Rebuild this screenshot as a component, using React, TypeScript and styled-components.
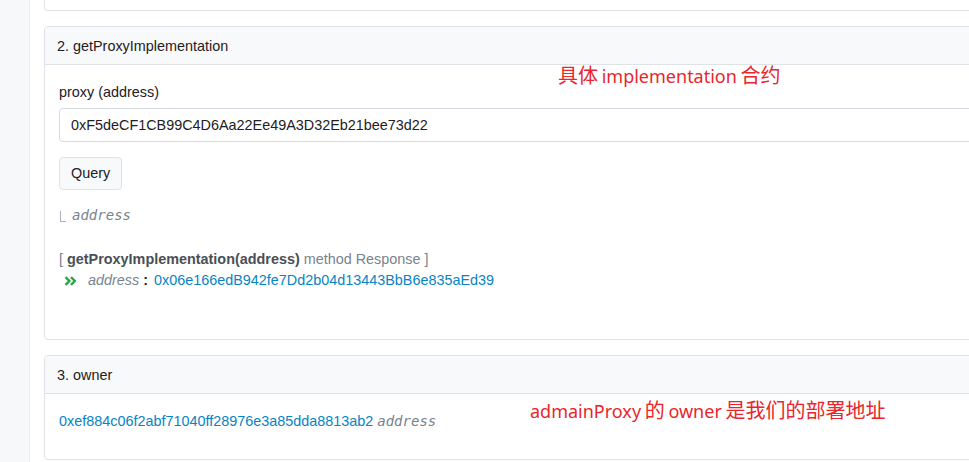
import styled, { createGlobalStyle, css } from 'styled-components';

const GlobalStyle = createGlobalStyle`
  html, body {
    margin: 0;
    padding: 0;
    background: #fff;
  }
  body {
    font-family: "Liberation Sans", Arial, Helvetica, sans-serif;
    font-size: 14.4px;
    line-height: 1.5;
    color: #1e2022;
  }
`;

const Page = styled.div`
  position: relative;
  display: flex;
  width: 969px;
  height: 462px;
  overflow: hidden;
`;

const Sidebar = styled.aside`
  flex: none;
  width: 29px;
  background: #f7f8fa;
  border-right: 1px solid #eceff3;
`;

const Main = styled.main`
  flex: 1;
  min-width: 0;
  display: flex;
  flex-direction: column;
  gap: 15px;
  padding-left: 14px;
  overflow: hidden;
`;

const Card = styled.section<{ $cut?: boolean }>`
  flex: none;
  width: 1000px;
  background: #fff;
  border: 1px solid #dfe2e6;
  border-radius: 4px;
  ${(p) =>
    p.$cut &&
    css`
      height: 10px;
      border-top: none;
      border-radius: 0 0 4px 4px;
    `}
`;

const CardHeader = styled.header`
  display: flex;
  align-items: center;
  box-sizing: border-box;
  height: 38px;
  padding: 2px 12px 0;
  background: #f8f9fa;
  border-bottom: 1px solid #dfe2e6;
  border-radius: 4px 4px 0 0;
`;

const CardBody = styled.div<{ $bottom: number }>`
  padding: 17px 14px ${(p) => p.$bottom}px;
`;

const FieldLabel = styled.label`
  display: block;
  margin-bottom: 4px;
`;

const AddressInput = styled.input`
  display: block;
  box-sizing: border-box;
  width: 100%;
  height: 34px;
  padding: 0 11px;
  font: inherit;
  color: #1e2022;
  background: #fff;
  border: 1px solid #d5dae2;
  border-radius: 4px;
  outline: none;
`;

const QueryButton = styled.button`
  display: block;
  height: 33px;
  margin-top: 15px;
  padding: 1px 11px 0;
  font: inherit;
  color: #1e2022;
  background: #f8f9fa;
  border: 1px solid #dfe2e6;
  border-radius: 4px;
`;

const ReturnType = styled.div`
  display: flex;
  align-items: center;
  margin-top: 15px;
`;

const Elbow = styled.span`
  display: inline-block;
  width: 5px;
  height: 10px;
  margin: 2px 6px 0 1px;
  border-left: 1px solid #aab3bc;
  border-bottom: 1px solid #aab3bc;
`;

const TypeName = styled.span`
  font-family: "DejaVu Sans Mono", "Liberation Mono", monospace;
  font-style: italic;
  font-size: 14px;
  color: #77838f;
`;

const ResponseTitle = styled.div`
  margin-top: 23px;
  color: #77838f;

  b {
    color: #4a4f55;
  }
`;

const ResultRow = styled.div`
  display: flex;
  align-items: center;
  padding-left: 5px;
`;

const ResultName = styled.i`
  margin-left: 11px;
  color: #77838f;
`;

const Colon = styled.b`
  margin: 0 6px 0 4px;
  color: #1e2022;
`;

const Link = styled.a`
  color: #0784c3;
  text-decoration: none;
`;

const OwnerRow = styled.div`
  display: flex;
  align-items: center;
  gap: 4px;
`;

const Note = styled.div<{ $top: number; $left: number }>`
  position: absolute;
  top: ${(p) => p.$top}px;
  left: ${(p) => p.$left}px;
  font-family: "Noto Sans", "Noto Sans CJK SC", sans-serif;
  font-size: 18px;
  line-height: 24px;
  word-spacing: -1px;
  color: #e8262b;
  white-space: nowrap;
`;

const Han = styled.span`
  font-family: "Noto Sans CJK SC", sans-serif;
  font-size: 20px;
`;

function Chevrons() {
  return (
    <svg width="13" height="10" viewBox="0 0 13 10" fill="none">
      <polyline points="1.5,1.2 5.3,5 1.5,8.8" stroke="#28a745" strokeWidth="2.4" />
      <polyline points="7,1.2 10.8,5 7,8.8" stroke="#28a745" strokeWidth="2.4" />
    </svg>
  );
}

export default function App() {
  return (
    <>
      <GlobalStyle />
      <Page>
        <Sidebar />
        <Main>
          <Card $cut />

          <Card>
            <CardHeader>2. getProxyImplementation</CardHeader>
            <CardBody $bottom={47}>
              <FieldLabel>proxy (address)</FieldLabel>
              <AddressInput readOnly defaultValue="0xF5deCF1CB99C4D6Aa22Ee49A3D32Eb21bee73d22" />
              <QueryButton>Query</QueryButton>
              <ReturnType>
                <Elbow />
                <TypeName>address</TypeName>
              </ReturnType>
              <ResponseTitle>
                [ <b>getProxyImplementation(address)</b> method Response ]
              </ResponseTitle>
              <ResultRow>
                <Chevrons />
                <ResultName>address</ResultName>
                <Colon>:</Colon>
                <Link href="#">0x06e166edB942fe7Dd2b04d13443BbB6e835aEd39</Link>
              </ResultRow>
            </CardBody>
          </Card>

          <Card>
            <CardHeader>3. owner</CardHeader>
            <CardBody $bottom={27}>
              <OwnerRow>
                <Link href="#">0xef884c06f2abf71040ff28976e3a85dda8813ab2</Link>
                <TypeName>address</TypeName>
              </OwnerRow>
            </CardBody>
          </Card>
        </Main>

        <Note $top={63} $left={558}>
          <Han>具体</Han> implementation <Han>合约</Han>
        </Note>
        <Note $top={398} $left={530}>
          admainProxy <Han>的</Han> owner <Han>是我们的部署地址</Han>
        </Note>
      </Page>
    </>
  );
}
